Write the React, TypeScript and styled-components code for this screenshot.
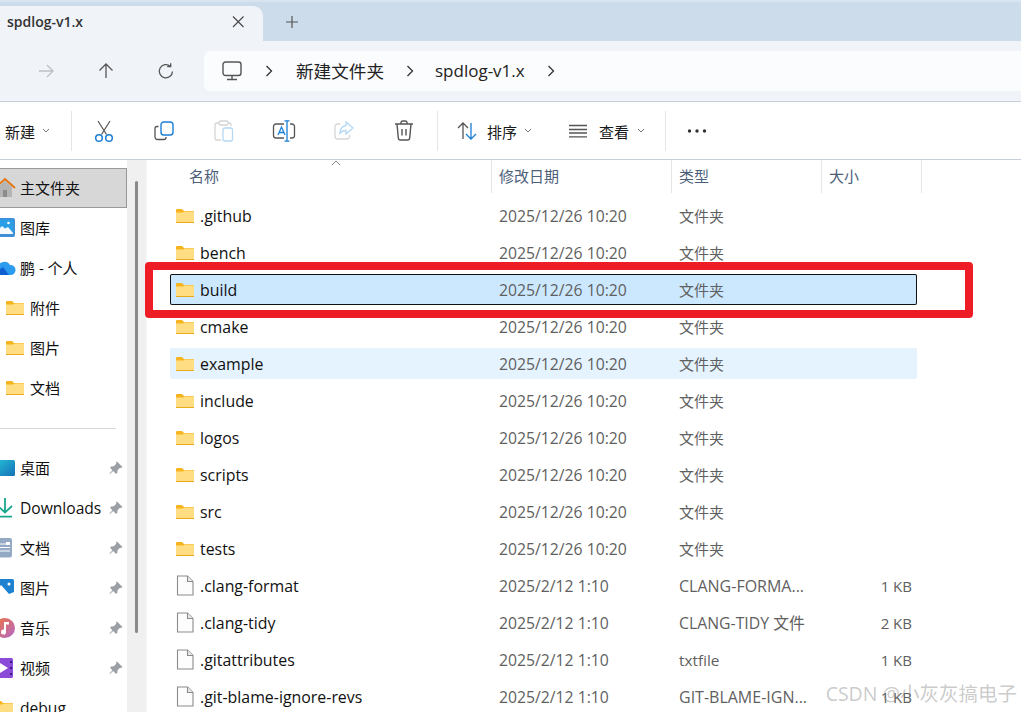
import React from 'react';
import styled, { createGlobalStyle } from 'styled-components';

const GlobalStyle = createGlobalStyle`
html, body { margin: 0; padding: 0; background: #fff; }
body { font-family: "Open Sans", "Noto Sans CJK SC", sans-serif; }
* { box-sizing: border-box; }
`;

const CJK = `"Open Sans", "Noto Sans CJK SC", sans-serif`;

const Window = styled.div`
position: relative;
width: 1021px;
height: 712px;
overflow: hidden;
background: #fff;
color: #1a1a1a;
font-family: ${CJK};
`;

const TabBar = styled.div`
display: flex;
align-items: flex-end;
height: 41px;
background: #cddcea;
border-top: 2px solid #d8e4ef;
`;
const Tab = styled.div`
display: flex;
align-items: center;
justify-content: space-between;
width: 263px;
height: 35px;
padding: 0 18px 4px 7px;
background: #f0f4f9;
border-radius: 0 10px 0 0;
font-size: 14px;
font-weight: 600;
color: #333;
`;
const NewTab = styled.div`
display: flex;
width: 58px;
height: 35px;
padding-bottom: 4px;
align-items: center;
justify-content: center;
`;

const NavRow = styled.div`
display: flex;
align-items: center;
height: 61px;
padding: 0 0 0 16px;
background: #f0f4f9;
border-bottom: 1px solid #c6cfda;
`;
const NavButton = styled.div`
display: flex;
width: 60px;
justify-content: center;
align-items: center;
`;
const Address = styled.div`
display: flex;
align-items: center;
flex: 1;
height: 40px;
margin-left: 8px;
padding-left: 18px;
background: #fbfcfe;
border-radius: 6px 0 0 6px;
font-size: 17px;
color: #222;
`;
const Crumb = styled.span<{ $w: number; $size: number }>`
display: block;
width: ${p => p.$w}px;
padding-bottom: 2px;
font-size: ${p => p.$size}px;
white-space: nowrap;
`;
const CrumbGap = styled.div<{ $w: number }>`
display: flex;
justify-content: center;
width: ${p => p.$w}px;
`;

const Toolbar = styled.div`
display: flex;
align-items: center;
height: 58px;
border-bottom: 1px solid #c6cfda;
background: #fff;
font-size: 15px;
`;
const ToolText = styled.span<{ $w?: number }>`
display: block;
padding-top: 2px;
white-space: nowrap;
width: ${p => (p.$w ? `${p.$w}px` : 'auto')};
`;
const Sep = styled.div`
width: 1px;
height: 40px;
background: #e5e5e5;
`;
const ToolSlot = styled.div`
display: flex;
width: 60px;
justify-content: center;
align-items: center;
`;
const ToolGroup = styled.div<{ $w: number; $pl: number }>`
display: flex;
align-items: center;
width: ${p => p.$w}px;
padding-left: ${p => p.$pl}px;
gap: 0;
`;
const Caret = styled.div<{ $ml: number }>`
display: flex;
margin-left: ${p => p.$ml}px;
`;
const LabelGap = styled.div<{ $w: number }>`
width: ${p => p.$w}px;
`;

const Body = styled.div`
display: flex;
height: 552px;
`;

const Sidebar = styled.div`
width: 127px;
flex: none;
padding-top: 8px;
font-size: 15px;
overflow: hidden;
`;
const SideRow = styled.div<{ $active?: boolean; $indent?: boolean }>`
display: flex;
align-items: center;
height: 40px;
padding-left: ${p => (p.$indent ? 6 : 0)}px;
background: ${p => (p.$active ? '#d7d7d7' : 'transparent')};
border: ${p => (p.$active ? '1px solid #999' : '0')};
border-left: 0;
color: #111;
white-space: nowrap;
`;
const SideIcon = styled.div<{ $indent?: boolean }>`
display: flex;
flex: none;
width: ${p => (p.$indent ? 24 : 20)}px;
margin-left: ${p => (p.$indent ? 0 : -5)}px;
margin-right: ${p => (p.$indent ? 0 : 5)}px;
`;
const SideLabel = styled.span<{ $latin?: boolean }>`
flex: 1;
padding-bottom: ${p => (p.$latin ? 0 : 2)}px;
font-size: ${p => (p.$latin ? 15.6 : 15)}px;
`;
const PinSlot = styled.div`
display: flex;
flex: none;
justify-content: flex-end;
width: 20px;
margin-right: 4px;
`;
const SideDivider = styled.div`
height: 1px;
margin: 20px 11px 19px 0;
background: #d8d8d8;
`;

const Gutter = styled.div`
width: 20px;
flex: none;
padding: 21px 0 0 8px;
background: #f0f0f0;
border-right: 1px solid #f6f6f6;
`;
const ScrollThumb = styled.div`
width: 3px;
height: 452px;
background: #8a8a8a;
border-radius: 2px;
`;

const Main = styled.div`
flex: 1;
min-width: 0;
position: relative;
`;
const HeaderRow = styled.div`
display: grid;
grid-template-columns: 345px 180px 150px 100px;
height: 33px;
font-size: 15px;
color: #4c607a;
`;
const HeaderCell = styled.div<{ $pl: number }>`
display: flex;
align-items: center;
padding-left: ${p => p.$pl}px;
padding-bottom: 3px;
border-right: 1px solid #e5e5e5;
`;
const SortMark = styled.div`
position: absolute;
left: 184px;
top: 0;
display: flex;
`;
const Rows = styled.div`
display: flex;
flex-direction: column;
gap: 6px;
margin: 7px 0 0 23px;
width: 747px;
`;
const Row = styled.div<{ $state?: 'selected' | 'hover' }>`
display: grid;
grid-template-columns: 329px 180px 150px 88px;
align-items: center;
height: 31px;
flex: none;
border-radius: 2px;
background: ${p => (p.$state === 'selected' ? '#cce8ff' : p.$state === 'hover' ? '#e5f3ff' : 'transparent')};
box-shadow: ${p => (p.$state === 'selected' ? 'inset 0 0 0 1px #111' : 'none')};
`;
const NameCell = styled.div`
display: flex;
align-items: center;
padding-left: 6px;
font-size: 15.9px;
color: #111;
white-space: nowrap;
`;
const FileIconSlot = styled.div`
display: flex;
flex: none;
width: 24px;
`;
const InfoCell = styled.div<{ $size?: number }>`
font-size: ${p => p.$size ?? 15}px;
color: #5f5f5f;
white-space: nowrap;
`;
const SizeCell = styled(InfoCell)`
text-align: right;
padding-right: 5px;
`;

const RedBox = styled.div`
position: absolute;
left: 145px;
top: 262px;
width: 828px;
height: 56px;
border: 8px solid #ee1c25;
border-radius: 4px;
`;
const Watermark = styled.div`
position: absolute;
right: 4px;
bottom: 5px;
font-size: 19.5px;
color: rgba(120, 120, 120, 0.4);
white-space: nowrap;
`;

/* ---------- icons ---------- */
const Svg = styled.svg`
display: block;
flex: none;
overflow: visible;
`;

const Close = () => (
    <Svg width="14" height="14" viewBox="0 0 14 14" fill="none" stroke="#444" strokeWidth="1.1">
        <path d="M2 1.5l10.5 10.5M12.5 1.5L2 12" />
    </Svg>
);
const Plus = () => (
    <Svg width="14" height="14" viewBox="0 0 14 14" fill="none" stroke="#555" strokeWidth="1.2">
        <path d="M7 1v12M1 7h12" />
    </Svg>
);
const ArrowRight = () => (
    <Svg width="18" height="18" viewBox="0 0 18 18" fill="none" stroke="#bcbfc3" strokeWidth="1.3">
        <path d="M2 9h14M10 3l6 6-6 6" />
    </Svg>
);
const ArrowUp = () => (
    <Svg width="18" height="18" viewBox="0 0 18 18" fill="none" stroke="#555" strokeWidth="1.3">
        <path d="M9 16V2M2.5 8.5L9 2l6.500 6.500" />
    </Svg>
);
const Refresh = () => (
    <Svg width="18" height="18" viewBox="0 0 18 18" fill="none" stroke="#555" strokeWidth="1.3">
        <path d="M15.500 9.500a6.600 6.600 0 1 1-2.200-5.200" />
        <path d="M13.700 1.200v3.500h-3.500" />
    </Svg>
);
const Monitor = () => (
    <Svg width="20" height="20" viewBox="0 0 20 20" fill="none" stroke="#555" strokeWidth="1.4">
        <rect x="1" y="1" width="18" height="13.500" rx="2.500" />
        <path d="M10 15v3M5 18.500h10" />
    </Svg>
);
const Chevron = () => (
    <Svg width="8" height="12" viewBox="0 0 8 12" fill="none" stroke="#333" strokeWidth="1.3">
        <path d="M1.500 1l5 5-5 5" />
    </Svg>
);
const DownCaret = () => (
    <Svg width="8" height="6" viewBox="0 0 8 6" fill="none" stroke="#777" strokeWidth="1">
        <path d="M1 1l3 3 3-3" />
    </Svg>
);
const Cut = () => (
    <Svg width="20" height="22" viewBox="0 0 20 22" fill="none">
        <path d="M4 1l8.500 13.500M16 1L7.500 14.500" stroke="#555" strokeWidth="1.2" />
        <circle cx="5" cy="18" r="3.300" stroke="#1b7fd6" strokeWidth="1.5" />
        <circle cx="15" cy="18" r="3.300" stroke="#1b7fd6" strokeWidth="1.5" />
    </Svg>
);
const Copy = () => (
    <Svg width="20" height="20" viewBox="0 0 20 20" fill="none">
        <path d="M4.500 5.500H3a2 2 0 0 0-2 2V16a2.500 2.500 0 0 0 2.500 2.500H10a2 2 0 0 0 2-2V16" stroke="#555" strokeWidth="1.3" />
        <rect x="7" y="1" width="12" height="13" rx="2.800" stroke="#1b7fd6" strokeWidth="1.4" />
    </Svg>
);
const Paste = () => (
    <Svg width="20" height="22" viewBox="0 0 20 22" fill="none">
        <path d="M5 3H3a2 2 0 0 0-2 2v13a2 2 0 0 0 2 2h4" stroke="#d4d4d4" strokeWidth="1.300" />
        <rect x="5" y="1" width="9" height="4" rx="1.500" stroke="#d4d4d4" strokeWidth="1.300" />
        <path d="M14 3h1a2 2 0 0 1 2 2v1" stroke="#d4d4d4" strokeWidth="1.300" />
        <rect x="9" y="8" width="9.500" height="13" rx="2" stroke="#b5d8f4" strokeWidth="1.300" />
    </Svg>
);
const Rename = () => (
    <Svg width="22" height="22" viewBox="0 0 22 22" fill="none">
        <path d="M11 4H3a2.500 2.500 0 0 0-2.500 2.500v9A2.500 2.500 0 0 0 3 18h8M17 4h2a2.500 2.500 0 0 1 2.500 2.500v9A2.500 2.500 0 0 1 19 18h-2" stroke="#555" strokeWidth="1.300" />
        <path d="M5 15l3.500-8 3.500 8M6.200 12.500h4.600" stroke="#1b7fd6" strokeWidth="1.300" />
        <path d="M14 .8v20.400M11.500.8h5M11.500 21.200h5" stroke="#1b7fd6" strokeWidth="1.300" />
    </Svg>
);
const Share = () => (
    <Svg width="20" height="20" viewBox="0 0 20 20" fill="none">
        <path d="M6 3H3.500A2.500 2.500 0 0 0 1 5.500v10A2.500 2.500 0 0 0 3.500 18H13a2.500 2.500 0 0 0 2.500-2.500V14" stroke="#d6d6d6" strokeWidth="1.300" />
        <path d="M12 1l7 6-7 6V9.500c-3 0-5 1-6.500 3.500C6 9 8 5 12 4.500z" stroke="#b5d8f4" strokeWidth="1.300" />
    </Svg>
);
const Trash = () => (
    <Svg width="20" height="21" viewBox="0 0 20 21" fill="none" stroke="#555" strokeWidth="1.400">
        <path d="M1 4h18M7 4V2.800A1.800 1.800 0 0 1 8.800 1h2.400A1.800 1.800 0 0 1 13 2.800V4" />
        <path d="M3 4l1.300 14a2.200 2.200 0 0 0 2.200 2h7a2.200 2.200 0 0 0 2.200-2L17 4" />
        <path d="M8 9v6.500M12 9v6.500" />
    </Svg>
);
const Sort = () => (
    <Svg width="20" height="20" viewBox="0 0 20 20" fill="none" strokeWidth="1.300">
        <path d="M6 18V2M1 7l5-5 5 5" stroke="#555" />
        <path d="M14 2v16M9 13l5 5 5-5" stroke="#1b7fd6" />
    </Svg>
);
const ViewLines = () => (
    <Svg width="20" height="14" viewBox="0 0 20 14" fill="none" stroke="#555" strokeWidth="1.300">
        <path d="M1 1.500h18M1 5.500h18M1 9h18M1 12.800h18" />
    </Svg>
);
const Dots = () => (
    <Svg width="20" height="4" viewBox="0 0 20 4" fill="#333">
        <circle cx="2.500" cy="2" r="1.700" />
        <circle cx="10" cy="2" r="1.700" />
        <circle cx="17.500" cy="2" r="1.700" />
    </Svg>
);
const SortUp = () => (
    <Svg width="10" height="6" viewBox="0 0 10 6" fill="none" stroke="#888" strokeWidth="1">
        <path d="M1 5l4-4 4 4" />
    </Svg>
);
const Folder = () => (
    <Svg width="18" height="14" viewBox="0 0 18 14">
        <path d="M0 1a1 1 0 0 1 1-1h5l2 2h9a1 1 0 0 1 1 1v2H0z" fill="#f6b51e" />
        <path d="M0 3.500h7l1.500-1H17a1 1 0 0 1 1 1V13a1 1 0 0 1-1 1H1a1 1 0 0 1-1-1z" fill="#ffdd82" />
        <rect x="0" y="13" width="18" height="1" fill="#eba91c" />
    </Svg>
);
const FileIcon = () => (
    <Svg width="18" height="21" viewBox="0 0 18 21" fill="#fdfdfd" stroke="#8b8b8b" strokeWidth="1.100">
        <path d="M1.500 1h10L17 6.500V20H1.500z" />
        <path d="M11.500 1v5.500H17" fill="#e8e8e8" />
    </Svg>
);
const Pin = () => (
    <Svg width="14" height="14" viewBox="0 0 14 14" fill="#9aa0a6">
        <path d="M8 .5l5.500 5.500-1.300 1-1.200-.3L8.500 9.200 8.300 11.800 7 13 4.200 10 1 13l-.5-.5L3.500 9.300 1 6.800l1.200-1.300 2.600-.2 2.500-2.500-.3-1.200z" />
    </Svg>
);
const Home = () => (
    <Svg width="20" height="20" viewBox="0 0 20 20">
        <path d="M3 9l7-6 7 6v10H3z" fill="#b4b4b4" />
        <rect x="8" y="12" width="4" height="7" fill="#8c8c8c" />
        <path d="M0 10l10-9 10 9" fill="none" stroke="#e27613" strokeWidth="2" />
    </Svg>
);
const Gallery = () => (
    <Svg width="20" height="20" viewBox="0 0 20 20">
        <rect x="0" y="0" width="20" height="19" rx="2" fill="#3f8fd6" />
        <rect x="0" y="1.500" width="18" height="14.500" fill="#2a9fe8" />
        <path d="M0 15l7-7 3 2.500 3-1.500 5 6v1H0z" fill="#f4f9fd" />
        <circle cx="13.500" cy="5" r="1.300" fill="#fff" />
    </Svg>
);
const Cloud = () => (
    <Svg width="20" height="14" viewBox="0 0 20 14">
        <path d="M4 14a4 4 0 0 1-1-7.800A6.500 6.500 0 0 1 15 4a5 5 0 0 1 1 10z" fill="#2b9bf0" />
        <path d="M0 12l8-6 6 8H4a4 4 0 0 1-4-2z" fill="#0f5fd0" />
    </Svg>
);
const Desktop = () => (
    <Svg width="20" height="16" viewBox="0 0 20 16">
        <defs>
            <linearGradient id="desktopFill" x1="0" y1="0" x2="1" y2="1">
                <stop offset="0" stopColor="#22c0d6" />
                <stop offset="1" stopColor="#1670b8" />
            </linearGradient>
        </defs>
        <rect width="20" height="16" rx="1.500" fill="url(#desktopFill)" />
    </Svg>
);
const Download = () => (
    <Svg width="20" height="20" viewBox="0 0 20 20" fill="none" stroke="#18a68c" strokeWidth="1.800">
        <path d="M10 0v14M3 8l7 6.500L17 8M0 18.700h17" />
    </Svg>
);
const Docs = () => (
    <Svg width="20" height="20" viewBox="0 0 20 20">
        <rect width="17" height="19.500" rx="2" fill="#93a9c4" />
        <path d="M0 6h11M0 9.500h15M0 13h15" stroke="#fff" strokeWidth="1.200" />
        <rect x="11" y="4" width="4" height="3" fill="#fff" />
    </Svg>
);
const Pictures = () => (
    <Svg width="20" height="18" viewBox="0 0 20 18">
        <rect width="19" height="18" rx="1.500" fill="#1f82d1" />
        <path d="M0 14l6-8 8 9 5-2v5H0z" fill="#fff" />
        <circle cx="14" cy="5" r="1.500" fill="#fff" />
    </Svg>
);
const Music = () => (
    <Svg width="20" height="20" viewBox="0 0 20 20">
        <defs>
            <linearGradient id="musicFill" x1="0" y1="0" x2="1" y2="1">
                <stop offset="0" stopColor="#ef7440" />
                <stop offset="1" stopColor="#b368c8" />
            </linearGradient>
        </defs>
        <circle cx="10" cy="10" r="10" fill="url(#musicFill)" />
        <path d="M9 4h5v2.500h-3V14a2.500 2.500 0 1 1-2-2.400z" fill="#fff" />
    </Svg>
);
const Video = () => (
    <Svg width="20" height="20" viewBox="0 0 20 20">
        <rect width="18" height="20" rx="1.500" fill="#8a4bd8" />
        <path d="M5 5l8 5-8 5z" fill="#fff" />
        <rect x="15" y="3" width="2" height="2" fill="#3d1a80" />
        <rect x="15" y="9" width="2" height="2" fill="#3d1a80" />
        <rect x="15" y="15" width="2" height="2" fill="#3d1a80" />
    </Svg>
);

const folders = ['.github', 'bench', 'build', 'cmake', 'example', 'include', 'logos', 'scripts', 'src', 'tests'];
const files = [
    { name: '.clang-format', type: 'CLANG-FORMA...', typeSize: 16, size: '1 KB' },
    { name: '.clang-tidy', type: 'CLANG-TIDY 文件', typeSize: 15.8, size: '2 KB' },
    { name: '.gitattributes', type: 'txtfile', typeSize: 15.3, size: '1 KB' },
    { name: '.git-blame-ignore-revs', type: 'GIT-BLAME-IGN...', typeSize: 16, size: '1 KB' },
];

const pinned = [
    { label: '桌面', icon: <Desktop /> },
    { label: 'Downloads', icon: <Download />, latin: true },
    { label: '文档', icon: <Docs /> },
    { label: '图片', icon: <Pictures /> },
    { label: '音乐', icon: <Music /> },
    { label: '视频', icon: <Video /> },
];

function App() {
    return (
        <Window>
            <GlobalStyle />
            <TabBar>
                <Tab>
                    spdlog-v1.x
                    <Close />
                </Tab>
                <NewTab><Plus /></NewTab>
            </TabBar>
            <NavRow>
                <NavButton><ArrowRight /></NavButton>
                <NavButton><ArrowUp /></NavButton>
                <NavButton><Refresh /></NavButton>
                <Address>
                    <Monitor />
                    <CrumbGap $w={54}><Chevron /></CrumbGap>
                    <Crumb $w={88} $size={17.6}>新建文件夹</Crumb>
                    <CrumbGap $w={51}><Chevron /></CrumbGap>
                    <Crumb $w={90} $size={17}>spdlog-v1.x</Crumb>
                    <CrumbGap $w={52}><Chevron /></CrumbGap>
                </Address>
            </NavRow>
            <Toolbar>
                <ToolGroup $w={71} $pl={5}>
                    <ToolText $w={37}>新建</ToolText>
                    <DownCaret />
                </ToolGroup>
                <Sep />
                <ToolGroup $w={365} $pl={2}>
                    <ToolSlot><Cut /></ToolSlot>
                    <ToolSlot><Copy /></ToolSlot>
                    <ToolSlot><Paste /></ToolSlot>
                    <ToolSlot><Rename /></ToolSlot>
                    <ToolSlot><Share /></ToolSlot>
                    <ToolSlot><Trash /></ToolSlot>
                </ToolGroup>
                <Sep />
                <ToolGroup $w={227} $pl={19}>
                    <Sort />
                    <LabelGap $w={10} />
                    <ToolText $w={30}>排序</ToolText>
                    <Caret $ml={7}><DownCaret /></Caret>
                    <LabelGap $w={36} />
                    <ViewLines />
                    <LabelGap $w={11} />
                    <ToolText $w={30}>查看</ToolText>
                    <Caret $ml={8}><DownCaret /></Caret>
                </ToolGroup>
                <Sep />
                <ToolGroup $w={60} $pl={21}><Dots /></ToolGroup>
            </Toolbar>
            <Body>
                <Sidebar>
                    <SideRow $active>
                        <SideIcon><Home /></SideIcon>
                        <SideLabel>主文件夹</SideLabel>
                    </SideRow>
                    <SideRow>
                        <SideIcon><Gallery /></SideIcon>
                        <SideLabel>图库</SideLabel>
                    </SideRow>
                    <SideRow>
                        <SideIcon><Cloud /></SideIcon>
                        <SideLabel>鹏 - 个人</SideLabel>
                    </SideRow>
                    {['附件', '图片', '文档'].map(label => (
                        <SideRow $indent key={label}>
                            <SideIcon $indent><Folder /></SideIcon>
                            <SideLabel>{label}</SideLabel>
                        </SideRow>
                    ))}
                    <SideDivider />
                    {pinned.map(item => (
                        <SideRow key={item.label}>
                            <SideIcon>{item.icon}</SideIcon>
                            <SideLabel $latin={item.latin}>{item.label}</SideLabel>
                            <PinSlot><Pin /></PinSlot>
                        </SideRow>
                    ))}
                    <SideRow>
                        <SideIcon><Folder /></SideIcon>
                        <SideLabel $latin>debug</SideLabel>
                    </SideRow>
                </Sidebar>
                <Gutter><ScrollThumb /></Gutter>
                <Main>
                    <HeaderRow>
                        <HeaderCell $pl={42}>名称</HeaderCell>
                        <HeaderCell $pl={7}>修改日期</HeaderCell>
                        <HeaderCell $pl={7}>类型</HeaderCell>
                        <HeaderCell $pl={7}>大小</HeaderCell>
                    </HeaderRow>
                    <SortMark><SortUp /></SortMark>
                    <Rows>
                        {folders.map(name => (
                            <Row key={name} $state={name === 'build' ? 'selected' : name === 'example' ? 'hover' : undefined}>
                                <NameCell>
                                    <FileIconSlot><Folder /></FileIconSlot>
                                    {name}
                                </NameCell>
                                <InfoCell $size={15.75}>2025/12/26 10:20</InfoCell>
                                <InfoCell>文件夹</InfoCell>
                                <SizeCell />
                            </Row>
                        ))}
                        {files.map(file => (
                            <Row key={file.name}>
                                <NameCell>
                                    <FileIconSlot><FileIcon /></FileIconSlot>
                                    {file.name}
                                </NameCell>
                                <InfoCell $size={15.75}>2025/2/12 1:10</InfoCell>
                                <InfoCell $size={file.typeSize}>{file.type}</InfoCell>
                                <SizeCell>{file.size}</SizeCell>
                            </Row>
                        ))}
                    </Rows>
                </Main>
            </Body>
            <RedBox />
            <Watermark>CSDN @小灰灰搞电子</Watermark>
        </Window>
    );
}

export default App;
